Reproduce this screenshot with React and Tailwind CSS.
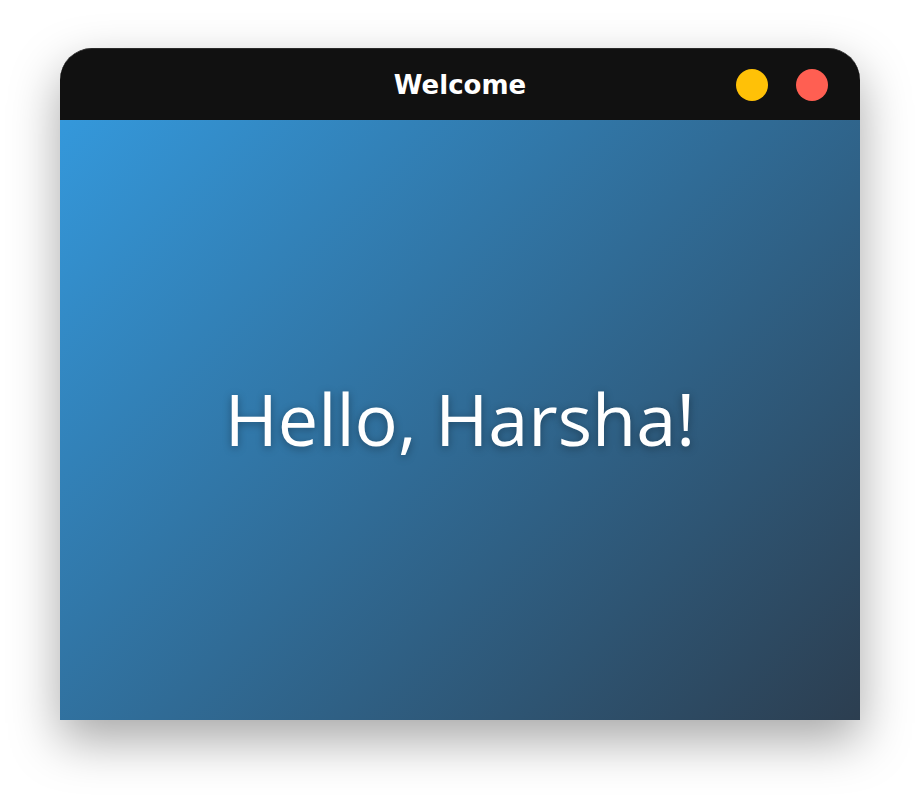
export default function App() {
  return (
    <div className="min-h-screen bg-white pt-12 flex justify-center">
      <div className="w-[800px] h-[672px] flex flex-col rounded-t-[32px] shadow-[0_20px_50px_rgba(0,0,0,0.35)]">
        <div className="h-[72px] shrink-0 rounded-t-[32px] bg-[#111111] border-t border-[#2a2a2a] relative flex items-center justify-center">
          <span className="text-white font-bold text-[26px] leading-none" style={{ fontFamily: "'DejaVu Sans', sans-serif" }}>
            Welcome
          </span>
          <div className="absolute right-8 top-1/2 -translate-y-1/2 flex gap-[28px]">
            <div className="w-8 h-8 rounded-full bg-[#ffc107]" />
            <div className="w-8 h-8 rounded-full bg-[#ff5f52]" />
          </div>
        </div>
        <div className="flex-1 bg-[linear-gradient(135deg,#3498db,#2c3e50)] flex items-center justify-center">
          <span
            className="text-white text-[72px] leading-none -mt-[4px] [text-shadow:0_2px_8px_rgba(0,0,0,0.35)]"
            style={{ fontFamily: "'Open Sans', sans-serif" }}
          >
            Hello, Harsha!
          </span>
        </div>
      </div>
    </div>
  );
}
